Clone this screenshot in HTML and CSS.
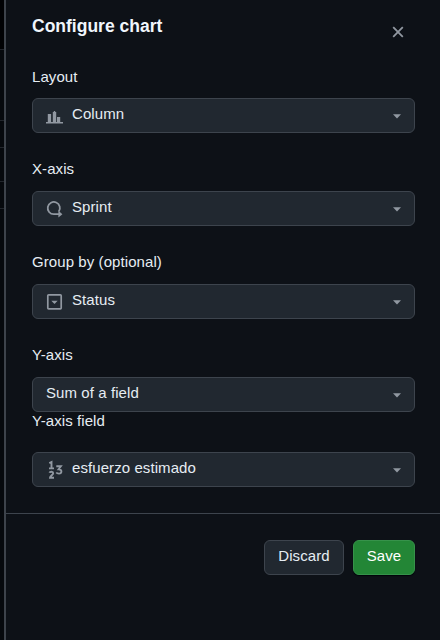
FILE: index.html
```html
<!DOCTYPE html>
<html lang="en">
<head>
<meta charset="utf-8">
<title>Configure chart</title>
<link rel="stylesheet" href="styles.css">
</head>
<body>
<div class="app">
  <div class="backdrop"><i class="r1"></i><i class="r2"></i><i class="r3"></i><i class="r4"></i><i class="r5"></i></div>
  <main class="panel">
    <header class="header">
      <h1>Configure chart</h1>
      <button class="close" aria-label="Close"><svg width="12" height="12" viewBox="0 0 12 12"><path d="M1.2 1.2 10.8 10.8M10.8 1.2 1.2 10.8" fill="none" stroke="currentColor" stroke-width="1.8"/></svg></button>
    </header>
    <form class="fields">
      <div class="field first">
        <label>Layout</label>
        <button type="button" class="select">
          <svg class="icon" width="17" height="16" viewBox="0 0 17 16"><path fill="currentColor" d="M0 14h17v1.4H0zM1.8 6h3.3v8H1.8zM6.8 4h1V3h1.4v1h1v10H6.8zM11 9h3.2v5H11z"/></svg>
          <span class="value">Column</span><svg class="caret" width="8" height="5" viewBox="0 0 8 5"><path d="M0 .3h8L4 4.5z" fill="currentColor"/></svg>
        </button>
      </div>
      <div class="field">
        <label>X-axis</label>
        <button type="button" class="select">
          <svg class="icon" width="17" height="16" viewBox="0 0 17 16"><path fill="none" stroke="currentColor" stroke-width="1.8" d="M12.8 10.6A6.1 6.1 0 1 0 7.8 13.2H13"/><path fill="currentColor" d="M12.4 9.8 16.4 13.2 12.4 16.6z"/></svg>
          <span class="value">Sprint</span><svg class="caret" width="8" height="5" viewBox="0 0 8 5"><path d="M0 .3h8L4 4.5z" fill="currentColor"/></svg>
        </button>
      </div>
      <div class="field">
        <label>Group by (optional)</label>
        <button type="button" class="select">
          <svg class="icon" width="17" height="16" viewBox="0 0 17 16"><rect x="1.8" y=".9" width="13.4" height="14" rx=".8" fill="none" stroke="currentColor" stroke-width="1.7"/><path fill="currentColor" d="M5.3 6.8h6.4L8.5 10z"/></svg>
          <span class="value">Status</span><svg class="caret" width="8" height="5" viewBox="0 0 8 5"><path d="M0 .3h8L4 4.5z" fill="currentColor"/></svg>
        </button>
      </div>
      <div class="field compact">
        <label>Y-axis</label>
        <button type="button" class="select">
          <span class="value">Sum of a field</span><svg class="caret" width="8" height="5" viewBox="0 0 8 5"><path d="M0 .3h8L4 4.5z" fill="currentColor"/></svg>
        </button>
      </div>
      <div class="field nested">
        <label>Y-axis field</label>
        <button type="button" class="select">
          <svg class="icon" width="17" height="18" viewBox="0 0 17 18"><g fill="none" stroke="currentColor" stroke-width="1.9"><path d="M3.3 2.2 5.5 1V7.4M3 7.4h5"/><path d="M3.5 11.8C4 10.3 7.2 10.3 7.2 12.2 7.2 13.6 4 15 4 16.8H8"/><path d="M10.3 5.2h4.6L12.6 8.3C16.6 8.3 15.9 12.6 13 12.6 11.7 12.6 10.8 12.2 10.2 11.5"/></g></svg>
          <span class="value">esfuerzo estimado</span><svg class="caret" width="8" height="5" viewBox="0 0 8 5"><path d="M0 .3h8L4 4.5z" fill="currentColor"/></svg>
        </button>
      </div>
    </form>
    <footer class="footer">
      <button class="btn discard">Discard</button>
      <button class="btn save">Save</button>
    </footer>
  </main>
</div>
</body>
</html>
```
FILE: styles.css
```css
* { box-sizing: border-box; }
body {
  margin: 0;
  background: #0d1117;
  color: #e6edf3;
  font: 15px/20px "Liberation Sans", Arial, sans-serif;
  letter-spacing: 0.08px;
}
.app { display: flex; width: 440px; height: 640px; overflow: hidden; }
.backdrop { width: 4px; background: #06090d; }
.backdrop i { display: block; border-bottom: 1px solid #22262c; }
.r1 { height: 50px; background: #010204; }
.r2 { height: 71px; }
.r3 { height: 27px; }
.r4 { height: 34px; }
.r5 { height: 27px; }
.panel { flex: 1; border-left: 2px solid #3d434b; }
button { font: inherit; letter-spacing: inherit; color: inherit; margin: 0; }
.header {
  display: flex;
  justify-content: space-between;
  height: 67px;
  padding: 16px 36px 0 26px;
}
h1 {
  margin: 0;
  font-size: 17.5px;
  line-height: 20px;
  font-weight: 700;
  letter-spacing: 0;
  color: #f0f6fc;
}
.close {
  display: flex;
  align-items: center;
  justify-content: center;
  width: 12px;
  height: 12px;
  margin-top: 10px;
  padding: 0;
  border: 0;
  background: none;
  color: #9198a1;
}
.fields { height: 446px; padding: 0 25px 0 26px; }
.field { height: 93px; }
.field label { display: block; height: 32px; }
.field.first { height: 92px; }
.field.first label { height: 31px; }
.field.compact { height: 67px; }
.field.nested label { height: 41px; margin-top: -1px; }
.select {
  display: flex;
  align-items: center;
  width: 383px;
  height: 35px;
  padding: 0 13px;
  border: 1px solid #3d444d;
  border-radius: 6px;
  background: #212830;
  text-align: left;
}
.icon { flex: none; margin: 1px 9px 0 0; color: #9198a1; overflow: visible; }
.value { flex: 1; margin-top: -3px; }
.caret { flex: none; margin-top: 2px; color: #9198a1; }
.footer {
  display: flex;
  justify-content: flex-end;
  gap: 9px;
  padding: 26px 25px 0;
  border-top: 1px solid #3d444d;
}
.btn {
  height: 35px;
  padding: 0 0 3px;
  border: 1px solid #3d444d;
  border-radius: 6px;
  background: #212830;
}
.discard { width: 80px; }
.save { width: 62px; background: #238636; border-color: #36924a; color: #fff; box-shadow: 0 1px 1px #010409; }
```
